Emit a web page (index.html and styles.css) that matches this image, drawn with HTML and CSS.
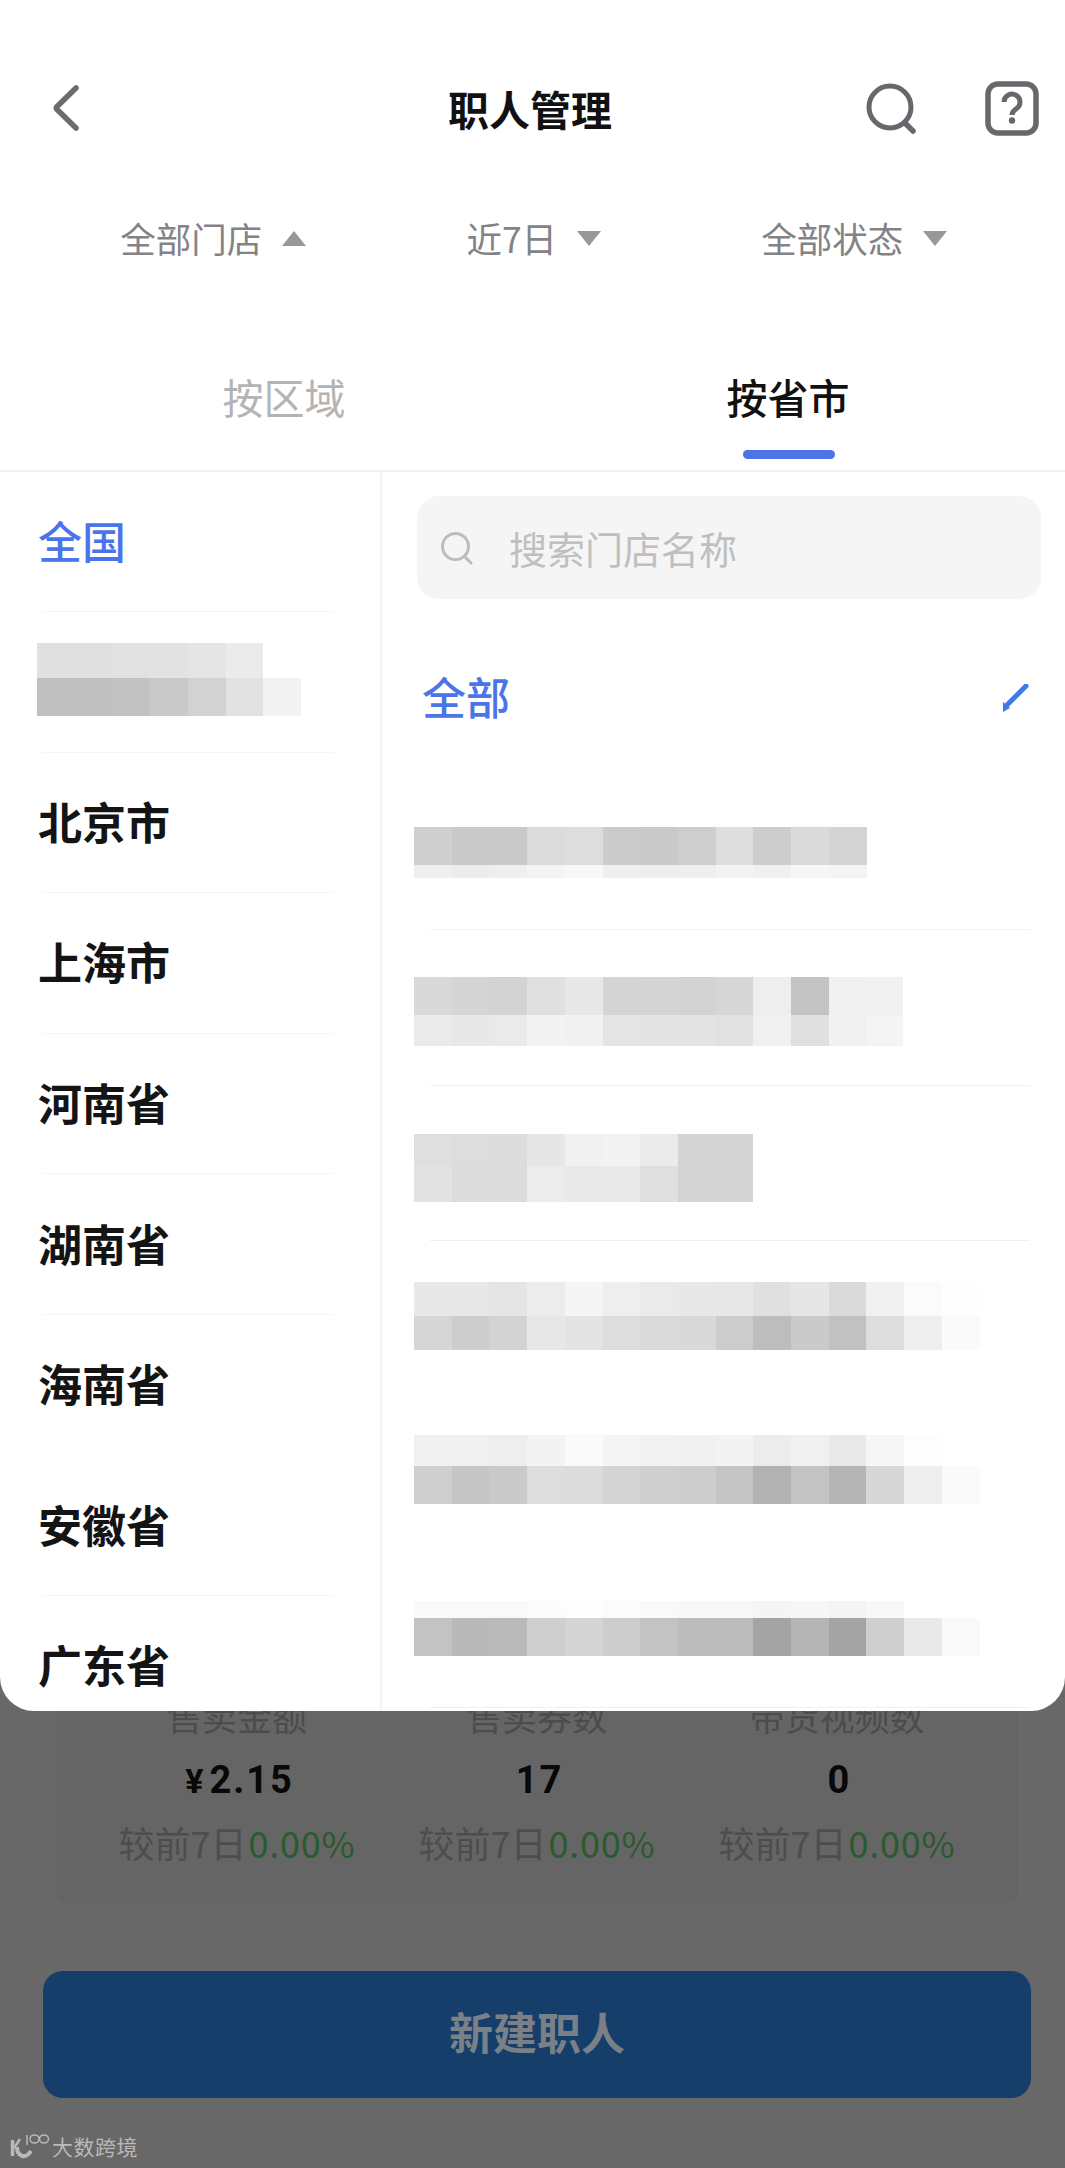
FILE: index.html
```html
<!DOCTYPE html>
<html lang="zh-CN">
<head>
  <meta charset="UTF-8">
  <meta name="viewport" content="width=device-width, initial-scale=1.0">
  <title>职人管理</title>
  <link rel="stylesheet" href="styles.css">
</head>
<body>
  <div class="page">

    <!-- Stats and button, dimmed behind the filter sheet -->
    <div class="stats-card">
      <div class="stats-inner">
        <div class="stat">
          <div class="stat-label">售卖金额</div>
          <div class="stat-value"><span class="yen">¥</span>2.15</div>
          <div class="stat-change">较前7日<span class="up">0.00%</span></div>
        </div>
        <div class="stat">
          <div class="stat-label">售卖券数</div>
          <div class="stat-value">17</div>
          <div class="stat-change">较前7日<span class="up">0.00%</span></div>
        </div>
        <div class="stat">
          <div class="stat-label">带货视频数</div>
          <div class="stat-value">0</div>
          <div class="stat-change">较前7日<span class="up">0.00%</span></div>
        </div>
      </div>
    </div>
    <button class="create-btn">新建职人</button>

    <!-- Filter sheet -->
    <div class="sheet">
      <div class="header">
        <svg class="back-icon" viewBox="0 0 26 46" width="26" height="46">
          <path d="M23 3 L3.6 22 Q3 23 3.6 24 L23 43" fill="none" stroke="#6b6b70" stroke-width="5.5" stroke-linecap="round" stroke-linejoin="round"/>
        </svg>
        <h1 class="title">职人管理</h1>
        <div class="header-actions">
          <svg viewBox="0 0 52 52" width="52" height="52">
            <circle cx="24" cy="25" r="21" fill="none" stroke="#67676c" stroke-width="5"/>
            <path d="M40 42 L47 49" stroke="#67676c" stroke-width="5.5" stroke-linecap="round"/>
          </svg>
          <svg viewBox="0 0 54 55" width="54" height="55">
            <rect x="3" y="3" width="48" height="49" rx="10" fill="none" stroke="#67676c" stroke-width="5.5"/>
            <path d="M19 21 a8 8 0 1 1 12 7 c-3 2 -4 3 -4 6" fill="none" stroke="#67676c" stroke-width="5"/>
            <circle cx="27" cy="39.5" r="3.2" fill="#67676c"/>
          </svg>
        </div>
      </div>

      <div class="filters">
        <div class="filter">全部门店<i class="tri tri-up"></i></div>
        <div class="filter">近7日<i class="tri"></i></div>
        <div class="filter">全部状态<i class="tri"></i></div>
      </div>

      <div class="tabs">
        <div class="tab">按区域</div>
        <div class="tab active">按省市</div>
      </div>

      <div class="panes">
        <div class="regions">
          <div class="region first selected"><span>全国</span></div>
          <div class="region"><div class="mosaic region-mosaic"><div class="m0a"></div><div class="m0b"></div></div></div>
          <div class="region"><span>北京市</span></div>
          <div class="region"><span>上海市</span></div>
          <div class="region"><span>河南省</span></div>
          <div class="region"><span>湖南省</span></div>
          <div class="region no-line"><span>海南省</span></div>
          <div class="region"><span>安徽省</span></div>
          <div class="region"><span>广东省</span></div>
        </div>

        <div class="stores">
          <div class="search-box">
            <svg viewBox="0 0 34 34" width="34" height="34">
              <circle cx="15.5" cy="15.5" r="13" fill="none" stroke="#bcbcbc" stroke-width="3"/>
              <path d="M25 26 L31 32" stroke="#bcbcbc" stroke-width="3" stroke-linecap="round"/>
            </svg>
            <span class="search-text">搜索门店名称</span>
          </div>

          <div class="store all no-line">
            <span class="store-all">全部</span>
            <svg class="check" viewBox="0 0 30 30" width="30" height="30">
              <path d="M26 2 L6 22" stroke="#3f7be6" stroke-width="5" stroke-linecap="round"/>
              <path d="M3 28 L3 18 L10 24 Z" fill="#3f7be6"/>
            </svg>
          </div>
          <div class="store"><div class="mosaic m-top1"><div class="m1a"></div><div class="m1b"></div></div></div>
          <div class="store"><div class="mosaic m-top2"><div class="m2a"></div><div class="m2b"></div></div></div>
          <div class="store"><div class="mosaic m-top3"><div class="m3a"></div><div class="m3b"></div></div></div>
          <div class="store no-line"><div class="mosaic m-top4"><div class="m4a"></div><div class="m4b"></div></div></div>
          <div class="store no-line"><div class="mosaic m-top5"><div class="m5a"></div><div class="m5b"></div></div></div>
          <div class="store"><div class="mosaic m-top6"><div class="m6a"></div><div class="m6b"></div></div></div>
        </div>
      </div>
    </div>

    <!-- Watermark -->
    <div class="watermark">
      <svg viewBox="0 0 40 26" width="40" height="26">
        <path d="M2.5 7 V23" stroke="#b9b9b9" stroke-width="3.5" fill="none"/>
        <path d="M4 15 L10 6" stroke="#b9b9b9" stroke-width="2.5" fill="none"/>
        <path d="M7 14 C7 23 15 27 21 18" stroke="#b9b9b9" stroke-width="4" fill="none"/>
        <path d="M17 2 V12" stroke="#b9b9b9" stroke-width="1.5" fill="none"/>
        <ellipse cx="24.5" cy="6" rx="4.5" ry="4" stroke="#b9b9b9" stroke-width="1.5" fill="none"/>
        <ellipse cx="34" cy="6" rx="4.5" ry="4" stroke="#b9b9b9" stroke-width="1.5" fill="none"/>
      </svg>
      <span>大数跨境</span>
    </div>
  </div>
</body>
</html>
```

FILE: styles.css
```css
* {
  box-sizing: border-box;
}
body {
  margin: 0;
  font-family: "Noto Sans CJK SC", "Noto Sans", sans-serif;
  background: #686868;
}
.page {
  position: relative;
  width: 1065px;
  height: 2168px;
  overflow: hidden;
  background: #686868;
  padding-top: 1600px;
}

/* dimmed content */
.stats-card {
  width: 1022px;
  height: 337px;
  margin-left: 19px;
  background: #686868;
  border-bottom: 1px solid #646464;
  border-radius: 0 0 16px 16px;
}
.stats-inner {
  display: grid;
  grid-template-columns: repeat(3, 300px);
  width: 962px;
  height: 303px;
  margin-left: 37px;
  padding: 93px 31px 0;
  background: #656565;
  border-radius: 0 0 10px 10px;
}
.stat {
  text-align: center;
}
.stat-label {
  height: 46px;
  font-size: 35px;
  line-height: 46px;
  color: #4c4c4c;
}
.stat-value {
  height: 54px;
  margin-top: 14px;
  padding-left: 5px;
  font-family: Roboto, sans-serif;
  font-weight: 700;
  font-size: 38px;
  line-height: 54px;
  letter-spacing: 2px;
  color: #080808;
}
.yen {
  margin-right: 4px;
  font-size: 34px;
}
.stat-change {
  height: 50px;
  margin-top: 10px;
  font-size: 36px;
  line-height: 50px;
  color: #4d4d4d;
  white-space: nowrap;
}
.up {
  margin-left: 2px;
  letter-spacing: 0.8px;
  color: #2a5b2d;
}
.create-btn {
  display: block;
  width: 988px;
  height: 127px;
  margin: 34px 0 0 43px;
  padding: 0 0 8px;
  border: none;
  border-radius: 20px;
  background: #163e6a;
  color: #7a8087;
  font-family: inherit;
  font-size: 44px;
  font-weight: 700;
}

/* sheet on top of the page */
.sheet {
  position: absolute;
  top: 0;
  left: 0;
  width: 1065px;
  height: 1711px;
  overflow: hidden;
  background: #fff;
  border-radius: 0 0 34px 34px;
}
.header {
  display: grid;
  grid-template-columns: 1fr auto 1fr;
  align-items: center;
  height: 60px;
  margin-top: 78px;
  padding: 0 26px 0 21px;
}
.back-icon {
  margin-left: 32px;
}
.title {
  margin: 0;
  font-size: 41px;
  font-weight: 700;
  color: #111;
}
.header-actions {
  display: flex;
  justify-content: flex-end;
  align-items: center;
  gap: 67px;
}
.filters {
  display: grid;
  grid-template-columns: repeat(3, 320.5px);
  height: 50px;
  margin-top: 75px;
  padding-left: 53px;
}
.filter {
  display: flex;
  justify-content: center;
  align-items: center;
  gap: 20px;
  font-size: 35.5px;
  line-height: 50px;
  color: #838387;
}
.tri {
  width: 0;
  height: 0;
  border-left: 12px solid transparent;
  border-right: 12px solid transparent;
  border-top: 15px solid #97989c;
}
.tri-up {
  border-top: none;
  border-bottom: 15px solid #97989c;
}
.tabs {
  display: grid;
  grid-template-columns: repeat(2, 504px);
  height: 101px;
  margin-top: 108px;
  padding-left: 32px;
  border-bottom: 2px solid #f2f2f2;
}
.tab {
  position: relative;
  height: 50px;
  text-align: center;
  font-size: 41px;
  line-height: 50px;
  color: #b4b4b4;
}
.tab.active {
  font-weight: 500;
  color: #111;
}
.tab.active::after {
  content: "";
  position: absolute;
  left: 207px;
  top: 79px;
  width: 92px;
  height: 9px;
  border-radius: 5px;
  background: #4a74e8;
}
.panes {
  display: flex;
  height: 1239px;
}

/* left column */
.regions {
  width: 382px;
  flex-shrink: 0;
  border-right: 2px solid #f4f4f4;
}
.region {
  display: flex;
  align-items: center;
  height: 140.6px;
  margin: 0 47px 0 42px;
  border-bottom: 1px solid #f5f5f5;
  font-size: 44px;
  font-weight: 700;
  color: #141414;
}
.region span {
  margin: -3px 0 0 -4px;
}
.region.first {
  height: 140px;
}
.region.selected {
  font-weight: 500;
  color: #4a74e8;
}
.region.no-line,
.store.no-line {
  border-bottom-color: transparent;
}

/* right column */
.stores {
  flex: 1;
  min-width: 0;
}
.search-box {
  display: flex;
  align-items: center;
  gap: 35px;
  height: 103px;
  margin: 24px 24px 20px 35px;
  padding-left: 23px;
  border-radius: 22px;
  background: #f5f5f5;
}
.search-text {
  font-size: 38px;
  color: #bfbfbf;
}
.store {
  height: 155.6px;
  margin: 0 35px 0 48px;
  border-bottom: 1px solid #f0f0f0;
}
.store.all {
  display: flex;
  align-items: center;
  justify-content: space-between;
}
.store-all {
  margin-left: -8px;
  font-size: 44px;
  font-weight: 500;
  color: #4a74e8;
}
.check {
  margin-top: 6px;
}

/* pixelated store names, painted as hard-stop bands */
.mosaic {
  margin-left: -16px;
}
.region .region-mosaic {
  margin: 0 0 5px -5px;
}
.m-top1 { padding-top: 52px; }
.m-top2 { padding-top: 47px; }
.m-top3 { padding-top: 48px; }
.m-top4 { padding-top: 41px; }
.m-top5 { padding-top: 38px; }
.m-top6 { padding-top: 48px; }

.m0a { width: 226px; height: 35px; background: linear-gradient(90deg, #e0e0e0 0 38px, #e0e0e0 38px 75px, #e1e1e1 75px 113px, #e2e2e2 113px 151px, #e5e5e5 151px 189px, #ebebeb 189px); }
.m0b { width: 264px; height: 38px; background: linear-gradient(90deg, #bfbfbf 0 38px, #bfbfbf 38px 75px, #c2c2c2 75px 113px, #c9c9c9 113px 151px, #d2d2d2 151px 189px, #e1e1e1 189px 226px, #f3f3f3 226px); }

.m1a { width: 453px; height: 38px; background: linear-gradient(90deg, #cfcfcf 0 38px, #c9c9c9 38px 75px, #c9c9c9 75px 113px, #dbdbdb 113px 151px, #dddddd 151px 189px, #cbcbcb 189px 226px, #cacaca 226px 264px, #cecece 264px 302px, #dedede 302px 339px, #cdcdcd 339px 377px, #dadada 377px 415px, #d4d4d4 415px); }
.m1b { width: 453px; height: 13px; background: linear-gradient(90deg, #efefef 0 38px, #ececec 38px 75px, #efefef 75px 113px, #f4f4f4 113px 151px, #f7f7f7 151px 189px, #efefef 189px 226px, #eeeeee 226px 264px, #eeeeee 264px 302px, #f3f3f3 302px 339px, #f0f0f0 339px 377px, #f6f6f6 377px 415px, #f4f4f4 415px); }

.m2a { width: 489px; height: 38px; background: linear-gradient(90deg, #d9d9d9 0 38px, #d5d5d5 38px 75px, #d3d3d3 75px 113px, #e0e0e0 113px 151px, #e8e8e8 151px 189px, #d5d5d5 189px 226px, #d4d4d4 226px 264px, #d3d3d3 264px 302px, #d7d7d7 302px 339px, #eeeeee 339px 377px, #c3c3c3 377px 415px, #f0f0f0 415px 452px, #f1f1f1 452px); }
.m2b { width: 489px; height: 31px; background: linear-gradient(90deg, #eaeaea 0 38px, #e8e8e8 38px 75px, #eaeaea 75px 113px, #f3f3f3 113px 151px, #f1f1f1 151px 189px, #e5e5e5 189px 226px, #e4e4e4 226px 264px, #e3e3e3 264px 302px, #e1e1e1 302px 339px, #f0f0f0 339px 377px, #e0e0e0 377px 415px, #f1f1f1 415px 452px, #f4f4f4 452px); }

.m3a { width: 339px; height: 32px; background: linear-gradient(90deg, #dfdfdf 0 38px, #dddddd 38px 75px, #dcdcdc 75px 113px, #e6e6e6 113px 151px, #f1f1f1 151px 189px, #f3f3f3 189px 226px, #ebebeb 226px 264px, #d4d4d4 264px); }
.m3b { width: 339px; height: 36px; background: linear-gradient(90deg, #e2e2e2 0 38px, #dcdcdc 38px 75px, #dcdcdc 75px 113px, #ececec 113px 151px, #e9e9e9 151px 226px, #dfdfdf 226px 264px, #d4d4d4 264px); }

.m4a { width: 566px; height: 34px; background: linear-gradient(90deg, #e8e8e8 0 75px, #e5e5e5 75px 113px, #ececec 113px 151px, #f5f5f5 151px 189px, #eeeeee 189px 226px, #eaeaea 226px 264px, #e8e8e8 264px 302px, #e7e7e7 302px 339px, #e0e0e0 339px 377px, #e6e6e6 377px 415px, #dadada 415px 452px, #f0f0f0 452px 490px, #fbfbfb 490px 528px, #fefefe 528px); }
.m4b { width: 566px; height: 34px; background: linear-gradient(90deg, #d6d6d6 0 38px, #cdcdcd 38px 75px, #d3d3d3 75px 113px, #e7e7e7 113px 151px, #e3e3e3 151px 189px, #dddddd 189px 226px, #dadada 226px 264px, #d9d9d9 264px 302px, #cccccc 302px 339px, #bdbdbd 339px 377px, #cacaca 377px 415px, #c1c1c1 415px 452px, #dddddd 452px 490px, #efefef 490px 528px, #fafafa 528px); }

.m5a { width: 528px; height: 31px; background: linear-gradient(90deg, #f0f0f0 0 75px, #eeeeee 75px 113px, #f3f3f3 113px 151px, #fafafa 151px 189px, #f5f5f5 189px 226px, #f2f2f2 226px 264px, #f1f1f1 264px 302px, #f3f3f3 302px 339px, #ececec 339px 377px, #f0f0f0 377px 415px, #e9e9e9 415px 452px, #f6f6f6 452px 490px, #fdfdfd 490px); }
.m5b { width: 566px; height: 38px; background: linear-gradient(90deg, #cfcfcf 0 38px, #c5c5c5 38px 75px, #cacaca 75px 113px, #dddddd 113px 151px, #dcdcdc 151px 189px, #d4d4d4 189px 226px, #cfcfcf 226px 264px, #cdcdcd 264px 302px, #c5c5c5 302px 339px, #b2b2b2 339px 377px, #c3c3c3 377px 415px, #b5b5b5 415px 452px, #d7d7d7 452px 490px, #eeeeee 490px 528px, #fafafa 528px); }

.m6a { width: 490px; height: 17px; background: linear-gradient(90deg, #f9f9f9 0 113px, #fcfcfc 113px 151px, #fdfdfd 151px 189px, #fbfbfb 189px 226px, #f9f9f9 226px 264px, #f8f8f8 264px 339px, #f5f5f5 339px 377px, #f7f7f7 377px 415px, #f4f4f4 415px 452px, #f8f8f8 452px); }
.m6b { width: 566px; height: 38px; background: linear-gradient(90deg, #c3c3c3 0 38px, #b9b9b9 38px 75px, #bababa 75px 113px, #cfcfcf 113px 151px, #d5d5d5 151px 189px, #cdcdcd 189px 226px, #c3c3c3 226px 264px, #bcbcbc 264px 339px, #a4a4a4 339px 377px, #b5b5b5 377px 415px, #a4a4a4 415px 452px, #cfcfcf 452px 490px, #e9e9e9 490px 528px, #f9f9f9 528px); }

/* watermark in the corner */
.watermark {
  position: absolute;
  left: 10px;
  bottom: 7px;
  display: flex;
  align-items: center;
  gap: 2px;
  font-size: 21px;
  letter-spacing: 0.5px;
  color: #b9b9b9;
}
```
